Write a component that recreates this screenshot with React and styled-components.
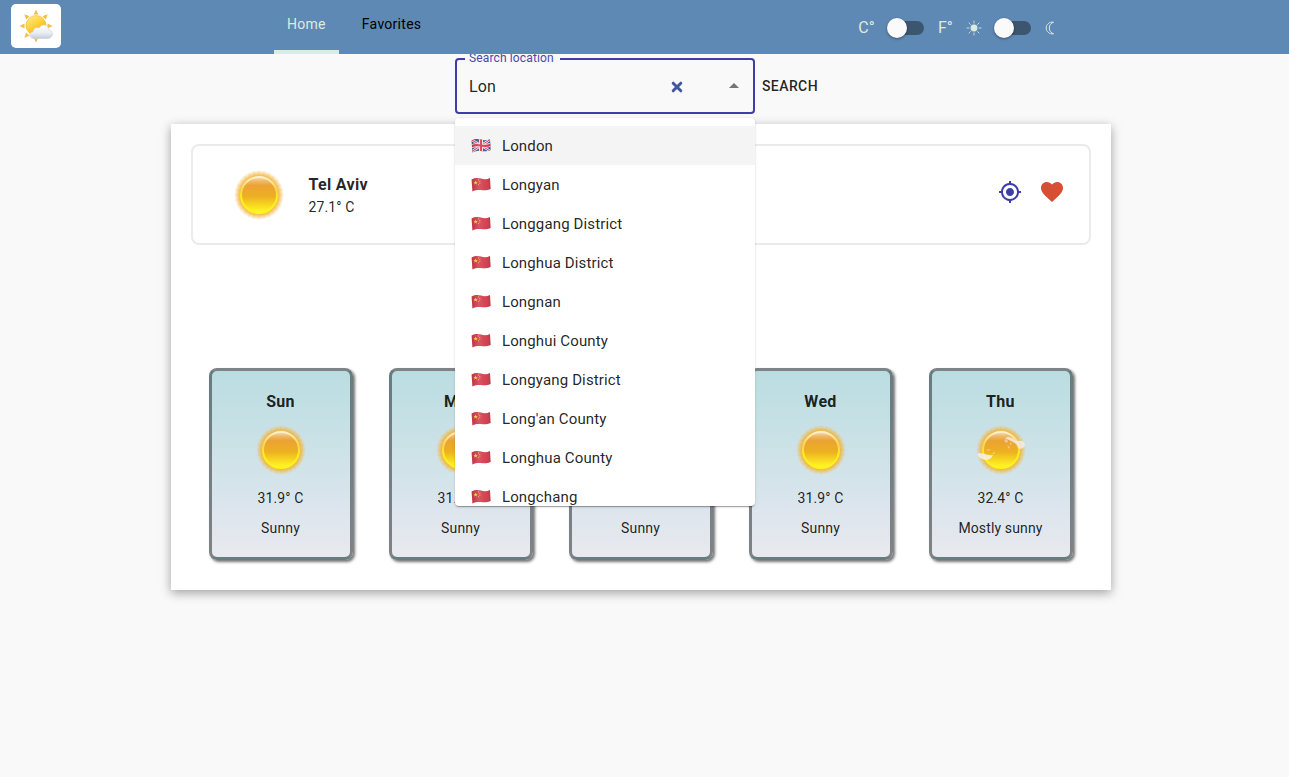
import React, { useId, useState } from "react";
import styled, { createGlobalStyle } from "styled-components";

const GlobalStyle = createGlobalStyle`
  *, *::before, *::after { box-sizing: border-box; }
  body {
    margin: 0;
    background: #f9f9f9;
    color: rgba(0, 0, 0, 0.87);
    font-family: Roboto, "Liberation Sans", sans-serif;
    font-size: 14px;
    line-height: 20px;
    letter-spacing: 0.01em;
  }
  button, input { font: inherit; letter-spacing: inherit; color: inherit; }
  h1, h2, p, ul { margin: 0; padding: 0; }
`;

/* ---------- header ---------- */

const Header = styled.header`
  position: relative;
  z-index: 3;
  display: grid;
  grid-template-columns: 263px 1fr auto;
  height: 54px;
  padding: 0 18% 0 11px;
  background: #5f89b5;
  color: #dcebe0;
`;

const LogoLink = styled.a`
  display: flex;
  align-items: center;
  justify-content: center;
  width: 50px;
  height: 44px;
  margin-top: 4px;
  border-radius: 5px;
  background: #fff;
`;

const Nav = styled.nav`
  display: flex;
  gap: 10px;
`;

const Tab = styled.a`
  padding: 14px 13px;
  border-bottom: 4px solid ${(p) => (p.$active ? "#dcebe0" : "transparent")};
  color: ${(p) => (p.$active ? "#dcebe0" : "#000")};
  text-decoration: none;
  letter-spacing: 0.02em;
`;

const Settings = styled.div`
  display: flex;
  align-items: center;
  gap: 13px;
  padding-top: 2px;
  font-size: 16px;
`;

const SwitchLabel = styled.label`
  display: flex;
  align-items: center;
  gap: 12px;
`;

const SwitchInput = styled.input`
  appearance: none;
  position: relative;
  width: 37px;
  height: 20px;
  margin: 0 2px 0 0;
  cursor: pointer;
  &::before {
    content: "";
    position: absolute;
    inset: 3px 0 3px 3px;
    border-radius: 7px;
    background: #3d566f;
  }
  &::after {
    content: "";
    position: absolute;
    top: 0;
    left: 0;
    width: 20px;
    height: 20px;
    border-radius: 50%;
    background: #fafafa;
    box-shadow: 0 1px 3px rgba(0, 0, 0, 0.4);
  }
  &:checked::after { left: 17px; }
`;

/* ---------- main ---------- */

const Main = styled.main`
  display: flex;
  flex-direction: column;
  align-items: center;
  gap: 10px;
  padding: 4px 8px 20px 0;
`;

const SearchForm = styled.form`
  display: flex;
  align-items: center;
`;

const Combo = styled.div`
  position: relative;
  width: 300px;
`;

const Field = styled.div`
  display: flex;
  align-items: center;
  height: 56px;
  padding: 2px 7px 0 12px;
  border: 2px solid #3f3da8;
  border-radius: 4px;
`;

const FieldLabel = styled.label`
  position: absolute;
  top: -10px;
  left: 10px;
  padding: 0 6px 0 4px;
  background: #f9f9f9;
  color: #4a48ac;
  font-size: 12px;
`;

const FieldInput = styled.input`
  flex: 1;
  min-width: 0;
  padding: 0;
  border: 0;
  outline: 0;
  background: none;
  font-size: 16px;
`;

const IconButton = styled.button`
  display: flex;
  align-items: center;
  justify-content: center;
  width: 24px;
  height: 24px;
  padding: 0;
  border: 0;
  background: none;
  cursor: pointer;
`;

const FieldActions = styled.div`
  display: flex;
  gap: 33px;
`;

const SearchButton = styled.button`
  padding: 8px 8px 8px 7px;
  border: 0;
  background: none;
  font-weight: 500;
  letter-spacing: 0.03em;
  cursor: pointer;
`;

const Menu = styled.ul`
  position: absolute;
  z-index: 2;
  top: 60px;
  left: 0;
  right: 0;
  height: 388px;
  padding: 8px 0;
  overflow: hidden;
  border-radius: 4px;
  background: #fff;
  box-shadow: 0 2px 1px -1px rgba(0, 0, 0, 0.2), 0 1px 1px rgba(0, 0, 0, 0.14),
    0 1px 3px rgba(0, 0, 0, 0.12);
  list-style: none;
`;

const Option = styled.li`
  display: flex;
  align-items: center;
  gap: 11px;
  height: 39px;
  padding: 0 16px;
  background: ${(p) => (p.$active ? "#f4f4f4" : "transparent")};
  font-size: 15px;
  cursor: pointer;
`;

const Panel = styled.section`
  display: flex;
  flex-direction: column;
  gap: 123px;
  width: 100%;
  max-width: 940px;
  padding: 20px 20px 30px;
  background: #fff;
  box-shadow: 0 3px 10px rgba(0, 0, 0, 0.36);
`;

const Current = styled.article`
  display: flex;
  align-items: center;
  gap: 25px;
  height: 101px;
  padding: 0 25px 0 41px;
  border: 2px solid #ebebeb;
  border-radius: 8px;
`;

const Place = styled.div`
  flex: 1;
  padding-top: 3px;
  line-height: 22px;
`;

const Title = styled.h2`
  font-size: 16px;
  font-weight: 700;
  line-height: 22px;
  letter-spacing: 0.02em;
`;

const Actions = styled.div`
  display: flex;
  gap: 18px;
  padding-bottom: 5px;
`;

const Days = styled.div`
  display: grid;
  grid-template-columns: repeat(5, 1fr);
  gap: 36px;
  padding: 0 18px;
`;

const Day = styled.article`
  display: flex;
  flex-direction: column;
  align-items: center;
  height: 192px;
  padding-top: 20px;
  border: 3px solid rgba(22, 28, 32, 0.5);
  border-radius: 8px;
  background: linear-gradient(#badde1, #d4e4ea 60%, #dde5ed 75%, #e8eaee);
  box-shadow: 2px 2px 3px rgba(0, 0, 0, 0.55);
`;

const DayIcon = styled.div`
  display: flex;
  margin: 12px 0 13px;
`;

const DayText = styled.p`
  margin-bottom: 10px;
`;

/* ---------- drawings ---------- */

function SunIcon({ clouds }) {
  const id = useId();
  const rays = Array.from({ length: 28 }, (_, i) => i * (360 / 28));
  return (
    <svg width="50" height="50" viewBox="0 0 50 50" aria-hidden="true">
      <defs>
        <radialGradient id={id + "g"}>
          <stop offset="0.72" stopColor="#f3b21d" stopOpacity="0.95" />
          <stop offset="0.84" stopColor="#f3b440" stopOpacity="0.65" />
          <stop offset="1" stopColor="#f8c860" stopOpacity="0" />
        </radialGradient>
        <linearGradient id={id + "r"} x2="0" y2="1">
          <stop offset="0" stopColor="#fdf1d2" />
          <stop offset="0.35" stopColor="#f9d54a" />
          <stop offset="0.6" stopColor="#fdee1c" />
          <stop offset="1" stopColor="#fdf51c" />
        </linearGradient>
        <linearGradient id={id + "b"} x2="0" y2="1">
          <stop offset="0" stopColor="#f6dcb4" />
          <stop offset="0.12" stopColor="#f0b865" />
          <stop offset="0.24" stopColor="#eba233" />
          <stop offset="0.55" stopColor="#edb022" />
          <stop offset="0.8" stopColor="#f8dc20" />
          <stop offset="1" stopColor="#fffb28" />
        </linearGradient>
      </defs>
      <circle cx="25" cy="25" r="25" fill={`url(#${id}g)`} />
      <g stroke="#f2b23c" strokeWidth="1" opacity="0.2">
        {rays.map((a) => (
          <line key={a} x1="25" y1="1" x2="25" y2="5" transform={`rotate(${a} 25 25)`} />
        ))}
      </g>
      <circle cx="25" cy="25" r="18" fill={`url(#${id}b)`} stroke={`url(#${id}r)`} strokeWidth="2" />
      {clouds && (
        <g fill="#f4efe8">
          <path opacity="0.8" d="M29 13c3-2 6-1 9 1 1 1 2 2 4 2 3-1 6 0 7 3 0 3-2 4-5 5-2-1-3-3-4-5-3-2-7-4-11-6z" />
          <path opacity="0.9" d="M1 29c3-1 5-1 7 0 3 0 5 2 9 1-1 3-4 5-8 5-4-1-7-3-8-6z" />
          <path opacity="0.5" d="M28 15l3-1 1 3-2 1zM34 17l2 2-2 1zM31 20l3 2-1 2zM10 25l5-1-3 2zM16 29l3-3-1 3zM37 14l4 3-1 1z" />
        </g>
      )}
    </svg>
  );
}

function Logo() {
  return (
    <svg width="34" height="34" viewBox="0 0 34 34" role="img" aria-label="Weather">
      <defs>
        <linearGradient id="logoSun" x1="0.2" y1="0" x2="0.8" y2="1">
          <stop offset="0" stopColor="#ffe98a" />
          <stop offset="0.5" stopColor="#ffcf2e" />
          <stop offset="1" stopColor="#f6a01c" />
        </linearGradient>
        <linearGradient id="logoCloud" x2="0" y2="1">
          <stop offset="0" stopColor="#ffffff" />
          <stop offset="0.6" stopColor="#e9ecf2" />
          <stop offset="1" stopColor="#c5ccd8" />
        </linearGradient>
      </defs>
      <g fill="#f6bd4a">
        {[0, 45, 90, 180, 225, 270, 315].map((a) => (
          <path key={a} d="M17 .5l2.400 5h-4.800z" transform={`rotate(${a} 17 17)`} />
        ))}
      </g>
      <circle cx="17" cy="16.500" r="10" fill="url(#logoSun)" stroke="#f0b23c" strokeWidth="0.6" />
      <path
        d="M15 29.500c-5 0-5.500-6-1-6.800 0-3.500 3.500-5.200 6-3.700 3-5 9.500-3.500 9.500 1.600 5.500 1 5 8.400-.5 8.900z"
        fill="url(#logoCloud)"
        stroke="#c9d0dc"
        strokeWidth="0.6"
      />
    </svg>
  );
}

const FLAG_SHAPE = "M.6 2.500C4 .8 7 .8 10 1.600S16 2.500 19 1l.6 11c-3 1.500-6.600 1.300-9.600 1S4 13 1.400 14.500z";

function Flag({ country }) {
  const id = useId();
  return (
    <svg width="20" height="15" viewBox="0 0 20 15" role="img" aria-label={country}>
      <defs>
        <clipPath id={id}>
          <path d={FLAG_SHAPE} />
        </clipPath>
        <linearGradient id={id + "s"}>
          <stop offset="0" stopColor="#000" stopOpacity="0.12" />
          <stop offset="0.4" stopColor="#fff" stopOpacity="0.14" />
          <stop offset="0.7" stopColor="#fff" stopOpacity="0.05" />
          <stop offset="1" stopColor="#000" stopOpacity="0.14" />
        </linearGradient>
      </defs>
      <g clipPath={`url(#${id})`}>
        {country === "GB" ? (
          <>
            <path fill="#31559c" d="M0 0h20v15H0z" />
            <path stroke="#f3eef2" strokeWidth="2.600" d="M0 1.500l20 12M0 14L20 1" />
            <path stroke="#d8364a" strokeWidth="1" d="M0 1.500l20 12M0 14L20 1" />
            <path fill="none" stroke="#f3eef2" strokeWidth="4" d="M10 0v15M0 8.500c4-2 7-1.500 10-1s7 .5 10-1" />
            <path fill="none" stroke="#d8364a" strokeWidth="2.200" d="M10 0v15M0 8.500c4-2 7-1.500 10-1s7 .5 10-1" />
          </>
        ) : (
          <>
            <path fill="#d33a4b" d="M0 0h20v15H0z" />
            <path fill="#f6d53a" d="M4.600 3.400l.6 1.500 1.600.1-1.200 1 .4 1.600-1.400-.9-1.400.9.4-1.600-1.200-1 1.600-.1z" />
            <g fill="#eec33c" opacity="0.8">
              <circle cx="7.500" cy="2.900" r=".6" />
              <circle cx="8.800" cy="4.400" r=".6" />
              <circle cx="8.800" cy="6.200" r=".6" />
              <circle cx="7.500" cy="7.700" r=".6" />
            </g>
          </>
        )}
        <path fill={`url(#${id}s)`} d="M0 0h20v15H0z" />
      </g>
    </svg>
  );
}

const DaylightIcon = () => (
  <svg width="16" height="16" viewBox="0 0 16 16" aria-hidden="true">
    <circle cx="8" cy="8" r="3.400" fill="#dcebe0" />
    <path
      stroke="#dcebe0"
      strokeWidth="0.8"
      d="M8 .5v3M8 12.500v3M.5 8h3M12.500 8h3M2.700 2.700l2 2M11.300 11.300l2 2M2.700 13.300l2-2M11.300 4.700l2-2"
    />
  </svg>
);

const MoonIcon = () => (
  <svg width="12" height="14" viewBox="0 0 12 14" aria-hidden="true">
    <path
      fill="none"
      stroke="#dcebe0"
      strokeWidth="1"
      d="M8.500 1.200C4.500.6 1.200 3.300 1.200 7s3.300 6.400 7.300 5.800C5.800 11.800 4.300 9.600 4.300 7s1.500-4.800 4.200-5.800z"
    />
  </svg>
);

const ClearIcon = () => (
  <svg width="12" height="12" viewBox="0 0 12 12" aria-hidden="true">
    <path stroke="#4356a2" strokeWidth="3" strokeLinecap="round" d="M2.200 2.200l7.600 7.600M9.800 2.200L2.200 9.800" />
  </svg>
);

const ArrowUpIcon = () => (
  <svg width="24" height="24" viewBox="0 0 24 24" aria-hidden="true">
    <path fill="#757575" d="M7 13l5-5 5 5z" />
  </svg>
);

const LocateIcon = () => (
  <svg width="24" height="24" viewBox="0 0 24 24" fill="#3f3da8" aria-hidden="true">
    <path d="M12 8c-2.210 0-4 1.790-4 4s1.790 4 4 4 4-1.790 4-4-1.790-4-4-4zm8.940 3c-.46-4.170-3.770-7.480-7.940-7.940V1h-2v2.060C6.830 3.520 3.520 6.830 3.060 11H1v2h2.060c.46 4.170 3.770 7.480 7.940 7.940V23h2v-2.060c4.170-.46 7.480-3.770 7.940-7.940H23v-2h-2.060zM12 19c-3.870 0-7-3.130-7-7s3.130-7 7-7 7 3.130 7 7-3.130 7-7 7z" />
  </svg>
);

const HeartIcon = () => (
  <svg width="24" height="24" viewBox="0 0 24 24" fill="#d64e33" aria-hidden="true">
    <path d="M12 22l-1.600-1.500C4.900 15.500 1 12 1 7.900 1 4.600 3.600 2 6.900 2 8.800 2 10.700 2.900 12 4.400 13.300 2.900 15.200 2 17.100 2 20.400 2 23 4.600 23 7.900c0 4.100-3.900 7.600-9.400 12.600z" />
  </svg>
);

/* ---------- data ---------- */

const places = [
  ["London", "GB"],
  ["Longyan", "CN"],
  ["Longgang District", "CN"],
  ["Longhua District", "CN"],
  ["Longnan", "CN"],
  ["Longhui County", "CN"],
  ["Longyang District", "CN"],
  ["Long'an County", "CN"],
  ["Longhua County", "CN"],
  ["Longchang", "CN"],
];

const days = [
  { name: "Sun", temp: "31.9° C", text: "Sunny" },
  { name: "Mon", temp: "31.9° C", text: "Sunny" },
  { name: "Tue", temp: "31.9° C", text: "Sunny" },
  { name: "Wed", temp: "31.9° C", text: "Sunny" },
  { name: "Thu", temp: "32.4° C", text: "Mostly sunny", clouds: true },
];

export default function App() {
  const [query, setQuery] = useState("Lon");

  return (
    <>
      <GlobalStyle />
      <Header>
        <LogoLink href="#home">
          <Logo />
        </LogoLink>
        <Nav>
          <Tab href="#home" $active aria-current="page">Home</Tab>
          <Tab href="#favorites">Favorites</Tab>
        </Nav>
        <Settings>
          <SwitchLabel>
            <span>C°</span>
            <SwitchInput type="checkbox" role="switch" aria-label="Fahrenheit" />
            <span>F°</span>
          </SwitchLabel>
          <SwitchLabel>
            <DaylightIcon />
            <SwitchInput type="checkbox" role="switch" aria-label="Dark mode" />
            <MoonIcon />
          </SwitchLabel>
        </Settings>
      </Header>

      <Main>
        <SearchForm onSubmit={(e) => e.preventDefault()}>
          <Combo>
            <Field>
              <FieldLabel htmlFor="location">Search location</FieldLabel>
              <FieldInput
                id="location"
                role="combobox"
                aria-expanded="true"
                aria-controls="location-options"
                autoComplete="off"
                value={query}
                onChange={(e) => setQuery(e.target.value)}
              />
              <FieldActions>
                <IconButton type="button" aria-label="Clear" onClick={() => setQuery("")}>
                  <ClearIcon />
                </IconButton>
                <IconButton type="button" aria-label="Close list">
                  <ArrowUpIcon />
                </IconButton>
              </FieldActions>
            </Field>
            <Menu id="location-options" role="listbox">
              {places.map(([name, country], i) => (
                <Option key={name} role="option" aria-selected={i === 0} $active={i === 0}>
                  <Flag country={country} />
                  {name}
                </Option>
              ))}
            </Menu>
          </Combo>
          <SearchButton type="submit">SEARCH</SearchButton>
        </SearchForm>

        <Panel>
          <Current>
            <SunIcon />
            <Place>
              <Title>Tel Aviv</Title>
              <p>27.1° C</p>
            </Place>
            <Actions>
              <IconButton type="button" aria-label="Use my location">
                <LocateIcon />
              </IconButton>
              <IconButton type="button" aria-label="Remove from favorites">
                <HeartIcon />
              </IconButton>
            </Actions>
          </Current>
          <Days>
            {days.map((day) => (
              <Day key={day.name}>
                <Title>{day.name}</Title>
                <DayIcon>
                  <SunIcon clouds={day.clouds} />
                </DayIcon>
                <DayText>{day.temp}</DayText>
                <DayText>{day.text}</DayText>
              </Day>
            ))}
          </Days>
        </Panel>
      </Main>
    </>
  );
}
